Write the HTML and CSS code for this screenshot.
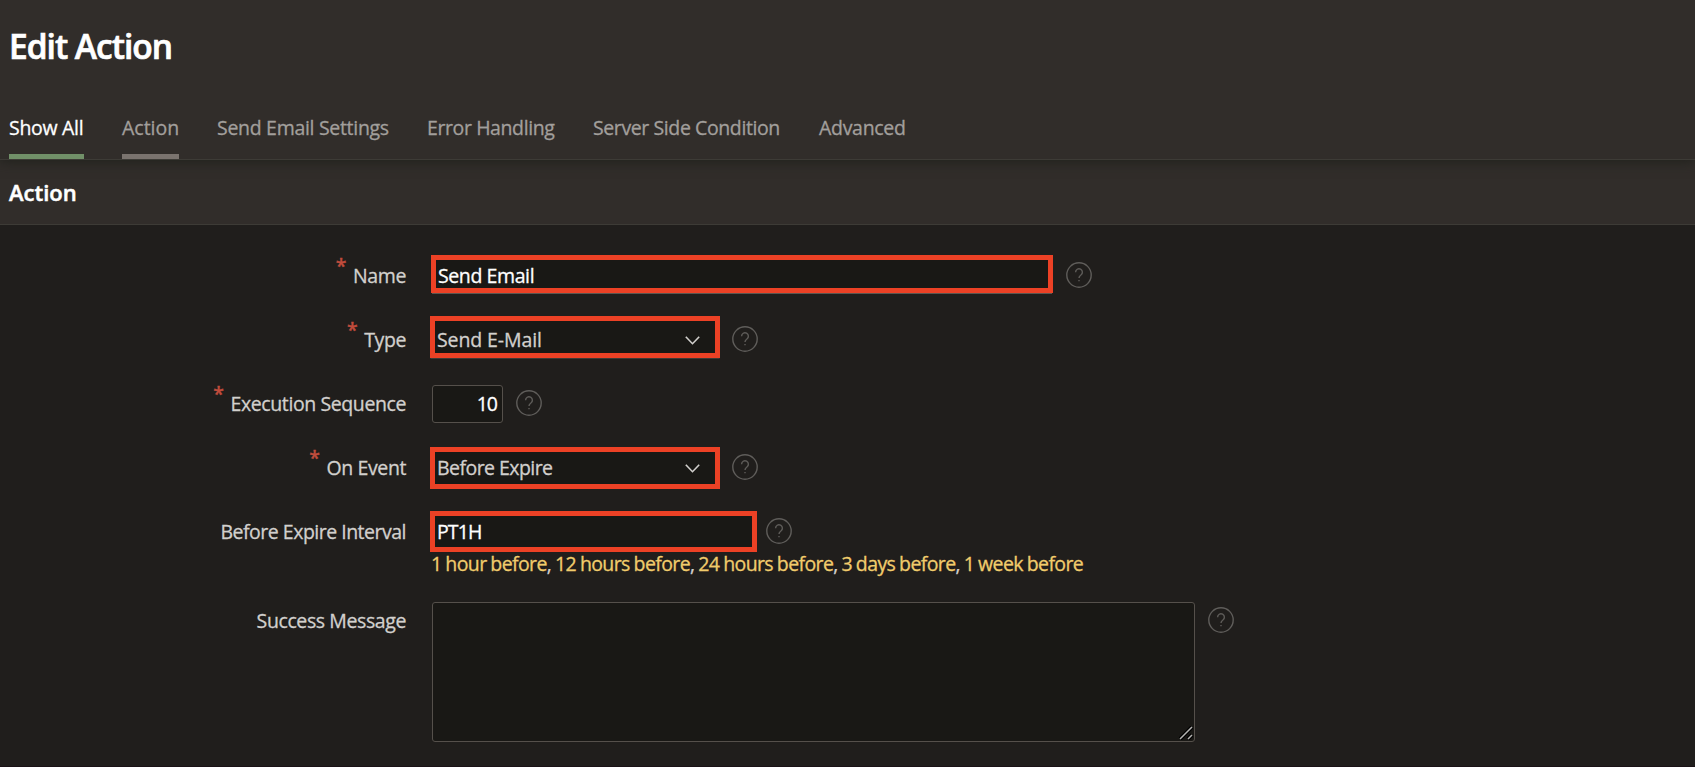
FILE: index.html
```html
<!DOCTYPE html>
<html lang="en">
<head>
<meta charset="utf-8">
<title>Edit Action</title>
<link rel="stylesheet" href="styles.css">
</head>
<body>
<svg class="defs" width="0" height="0">
  <symbol id="help" viewBox="0 0 26 26">
    <circle cx="13" cy="13" r="12.2"/>
    <path d="M9.6 10.2a3.4 3.4 0 1 1 5.3 2.8c-1.3.9-1.9 1.5-1.9 3M13 18v1.3"/>
  </symbol>
  <symbol id="chevron" viewBox="0 0 15 9"><path d="M.8 .8l6.7 6.9L14.2 .8"/></symbol>
</svg>
<header class="header">
  <h1 class="title">Edit Action</h1>
  <nav class="tabs">
    <a class="tab tab-current">Show All</a>
    <a class="tab tab-hover">Action</a>
    <a class="tab tab-email">Send Email Settings</a>
    <a class="tab tab-error">Error Handling</a>
    <a class="tab tab-server">Server Side Condition</a>
    <a class="tab">Advanced</a>
  </nav>
</header>
<h2 class="section">Action</h2>
<main class="form">
  <div class="row">
    <label class="label required"><span>Name</span></label>
    <div class="outline name"><div class="field">Send Email</div></div>
    <svg class="help"><use href="#help"/></svg>
  </div>
  <div class="row">
    <label class="label required"><span>Type</span></label>
    <div class="outline select type"><div class="field">Send E-Mail</div><svg class="chevron"><use href="#chevron"/></svg></div>
    <svg class="help"><use href="#help"/></svg>
  </div>
  <div class="row">
    <label class="label required"><span>Execution Sequence</span></label>
    <div class="number">10</div>
    <svg class="help"><use href="#help"/></svg>
  </div>
  <div class="row">
    <label class="label required"><span>On Event</span></label>
    <div class="outline select event"><div class="field">Before Expire</div><svg class="chevron"><use href="#chevron"/></svg></div>
    <svg class="help"><use href="#help"/></svg>
  </div>
  <div class="row">
    <label class="label label-interval"><span>Before Expire Interval</span></label>
    <div class="outline interval"><div class="field">PT1H</div></div>
    <svg class="help"><use href="#help"/></svg>
  </div>
  <p class="hint"><a>1 hour before</a>, <a>12 hours before</a>, <a>24 hours before</a>, <a>3 days before</a>, <a>1 week before</a></p>
  <div class="row row-message">
    <label class="label"><span>Success Message</span></label>
    <div class="area"><svg class="grip" viewBox="0 0 14 14"><path class="grip-shade" d="M1 13L13 1M9 13l4-4"/><path d="M1 13L13 1M9 13l4-4"/></svg></div>
    <svg class="help"><use href="#help"/></svg>
  </div>
</main>
</body>
</html>
```
FILE: styles.css
```css
* { box-sizing: border-box; }
body {
  margin: 0;
  height: 767px;
  overflow: hidden;
  background: #201e1c;
  border-bottom: 1px solid #1a1216;
  color: #d2d0cd;
  font: 400 19.5px/26px "Open Sans", sans-serif;
  font-stretch: 88%;
  letter-spacing: -0.3px;
  white-space: nowrap;
  -webkit-text-stroke: 0.3px currentColor;
}
svg { -webkit-text-stroke: 0; }
.defs { display: block; }
.header {
  position: relative;
  height: 160px;
  padding: 25px 9px 0;
  background: #312d2a;
  border-bottom: 1px solid #3d3b36;
  box-shadow: 0 1px 12px #1f201b;
}
.title { margin: 0; font-size: 33.5px; line-height: 42px; font-weight: 600; letter-spacing: -1px; color: #fff; -webkit-text-stroke: 0.7px #fff; }
.tabs { display: flex; gap: 38px; margin-top: 48px; }
.tab { height: 44px; color: #a29f9c; flex: none; }
.tab-current { width: 75px; color: #fff; border-bottom: 5px solid #719068; }
.tab-hover { width: 57px; letter-spacing: 0; border-bottom: 5px solid #7a736e; }
.tab-email { width: 172px; }
.tab-error { width: 128px; letter-spacing: -0.4px; }
.tab-server { width: 188px; letter-spacing: -0.4px; }
.section {
  margin: 0;
  height: 65px;
  padding: 19px 9px 0;
  background: #312d2a;
  border-bottom: 1px solid #3d3b36;
  font-size: 22px;
  line-height: 26px;
  font-weight: 600;
  letter-spacing: 0;
  color: #fff;
  -webkit-text-stroke: 0.5px #fff;
}
.form { padding-top: 19px; }
.row { display: flex; align-items: center; height: 64px; }
.label { width: 406px; margin-right: 24px; text-align: right; letter-spacing: -0.4px; flex: none; }
.label-interval { letter-spacing: -0.5px; }
.required::before { content: "*"; color: #c04c3c; font-weight: 600; position: relative; top: -10px; margin-right: 7px; }
.outline { border: 5px solid #ec4125; background: #191815; display: flex; align-items: center; justify-content: space-between; color: #fff; padding: 0 15px 0 2px; }
.name { width: 622px; height: 38px; margin-left: 1px; margin-top: -4px; padding-top: 4px; box-shadow: 0 2px 0 -1px #5b5650; letter-spacing: -0.4px; }
.select { width: 290px; height: 42px; color: #d2d0cd; }
.type { margin-top: -6px; padding-top: 6px; box-shadow: 0 1px 0 -0.5px #5b5650; letter-spacing: -0.1px; }
.event { letter-spacing: -0.55px; }
.interval { width: 327px; height: 41px; margin-top: -1px; letter-spacing: -0.9px; }
.number { width: 71px; height: 38px; margin-left: 2px; border: 1px solid #55504b; border-radius: 3px; background: #191815; color: #fff; text-align: right; letter-spacing: -1px; padding: 5px 5px; }
.help { width: 26px; height: 26px; margin: -2px 0 0 13px; fill: none; stroke: #5f5d5a; stroke-width: 1.4; flex: none; }
.select + .help { margin-left: 12px; }
.interval + .help { margin-left: 9px; }
.chevron { width: 15px; height: 9px; fill: none; stroke: #d2d0cd; stroke-width: 1.6; }
.hint { margin: -13px 0 0 431px; letter-spacing: -0.6px; word-spacing: -0.7px; }
.hint a { color: #f1cc6c; }
.row-message { align-items: flex-start; height: auto; margin-top: 25px; }
.row-message .label { padding-top: 6px; }
.area { width: 763px; height: 140px; margin-left: 2px; border: 1px solid #55504b; border-radius: 3px; background: #191815; display: flex; align-items: flex-end; justify-content: flex-end; padding: 0 1px 1px 0; }
.grip { width: 14px; height: 14px; fill: none; stroke: #b5b4b2; stroke-width: 1.5; }
.grip-shade { stroke: #000; stroke-width: 4; }
.row-message .help { margin-top: 5px; }
```
